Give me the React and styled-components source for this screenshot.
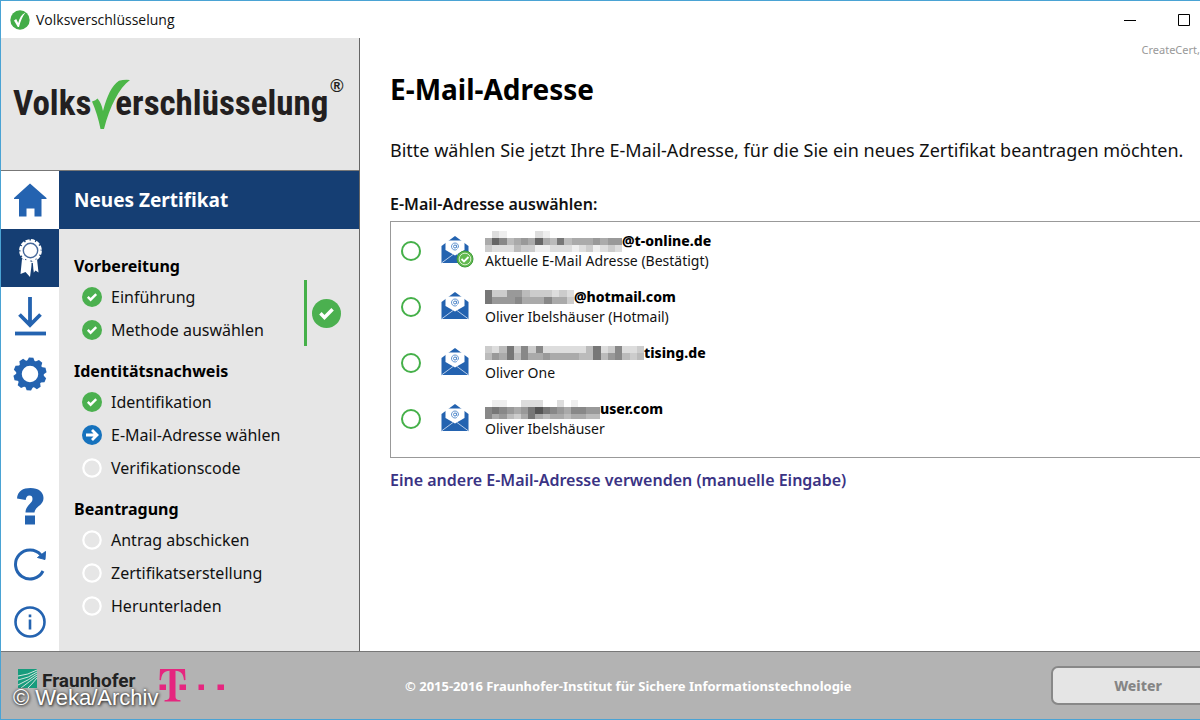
import React from "react";
import styled, { createGlobalStyle } from "styled-components";

const GlobalStyle = createGlobalStyle`
  *, *::before, *::after { box-sizing: border-box; }
  html, body, #root { height: 100%; }
  body { margin: 0; overflow: hidden; font-family: "Noto Sans", "Open Sans", sans-serif; color: #111; background: #fff; }
  h1, h2, h3, p, ol, ul { margin: 0; padding: 0; font-weight: inherit; }
  button { font-family: inherit; }
`;

const Window = styled.div`
  min-height: 100%;
  display: flex;
  flex-direction: column;
  border: 1px solid #4aa3d4;
  border-right: 0;
  overflow: hidden;
`;

const TitleBar = styled.header`
  display: flex;
  align-items: center;
  gap: 6px;
  height: 37px;
  padding-left: 9px;
  font-size: 14px;
  font-family: "Open Sans", sans-serif;
`;

const Controls = styled.div`
  display: flex;
  gap: 30px;
  margin-left: auto;
  padding-right: 4px;
`;

const WindowButton = styled.button`
  display: grid;
  place-items: center;
  width: 24px;
  height: 24px;
  padding: 0;
  border: 0;
  background: none;
`;

const Body = styled.div`
  flex: 1;
  display: flex;
`;

const Sidebar = styled.aside`
  flex: none;
  width: 359px;
  display: flex;
  flex-direction: column;
  background: #e6e6e6;
  border-right: 1px solid #666;
`;

const Brand = styled.div`
  display: flex;
  align-items: center;
  height: 133px;
  padding-left: 12px;
  border-bottom: 1px solid #777;
  font: bold 35px/40px "Roboto Condensed", "Liberation Sans Narrow", sans-serif;
  color: #231f20;
`;

const Registered = styled.span`
  align-self: flex-start;
  margin: 38px 0 0 2px;
  font: bold 18px/20px "Liberation Sans", sans-serif;
`;

const SideBody = styled.div`
  flex: 1;
  display: flex;
`;

const Rail = styled.nav`
  width: 58px;
  display: flex;
  flex-direction: column;
  background: #fff;
`;

const RailButton = styled.button`
  display: grid;
  place-items: center;
  height: 58px;
  padding: 0;
  border: 0;
  background: ${(p) => (p.$active ? "#153e73" : "transparent")};
`;

const Spacer = styled.div`
  flex: 1;
`;

const Steps = styled.div`
  flex: 1;
`;

const StepsTitle = styled.h2`
  height: 58px;
  padding-left: 15px;
  background: #153e73;
  color: #fff;
  font-size: 19px;
  line-height: 58px;
  font-weight: bold;
`;

const Groups = styled.div`
  padding: 23px 16px 0 15px;
`;

const Group = styled.section`
  display: flex;
  justify-content: space-between;
  align-items: flex-end;
  margin-bottom: 11px;
`;

const GroupTitle = styled.h3`
  font-size: 16px;
  line-height: 28px;
  font-weight: bold;
  color: #000;
`;

const StepList = styled.ol`
  list-style: none;
`;

const Step = styled.li`
  display: flex;
  align-items: center;
  gap: 9px;
  height: 33px;
  padding-left: 8px;
  font-size: 16px;
`;

const GroupDone = styled.div`
  display: flex;
  align-items: center;
  height: 66px;
  padding: 0 2px 0 5px;
  border-left: 3px solid #45b049;
`;

const Main = styled.main`
  flex: 1;
  min-width: 0;
  padding-left: 30px;
  overflow: hidden;
`;

const Trace = styled.p`
  text-align: right;
  font-size: 11px;
  line-height: 24px;
  color: #999;
`;

const Heading = styled.h1`
  margin-top: 8px;
  font-size: 28px;
  line-height: 38px;
  font-weight: bold;
  color: #000;
`;

const Lead = styled.p`
  margin-top: 28px;
  font-size: 18px;
  line-height: 28px;
`;

const Choices = styled.fieldset`
  margin: 28px 0 0;
  padding: 0;
  border: 0;
  min-width: 0;
`;

const ChoicesTitle = styled.legend`
  padding: 0;
  font-size: 16px;
  line-height: 24px;
  font-weight: 600;
`;

const ChoiceBox = styled.div`
  margin-top: 5px;
  padding: 1px 0 10px;
  border: 1px solid #999;
  border-right: 0;
`;

const Choice = styled.label`
  display: flex;
  align-items: center;
  height: 56px;
  padding-left: 10px;
`;

const Radio = styled.input`
  appearance: none;
  width: 20px;
  height: 20px;
  margin: 0 20px 0 0;
  border: 2px solid #45b049;
  border-radius: 50%;
  &:checked { background: radial-gradient(#45b049 45%, #fff 50%); }
`;

const Address = styled.span`
  display: flex;
  flex-direction: column;
  margin-left: 11px;
  font-size: 14px;
  line-height: 20px;
`;

const Mail = styled.span`
  display: flex;
  align-items: center;
  height: 20px;
  font-weight: 800;
  color: #000;
`;

const OtherLink = styled.a`
  display: inline-block;
  margin-top: 10px;
  font-size: 16px;
  line-height: 24px;
  font-weight: 600;
  color: #3a3384;
  text-decoration: none;
`;

const Footer = styled.footer`
  display: flex;
  align-items: center;
  justify-content: space-between;
  height: 68px;
  border-top: 1px solid #777;
  background: #b3b3b3;
`;

const Logos = styled.div`
  display: flex;
  position: relative;
  width: 390px;
  height: 67px;
  padding: 17px 0 0 17px;
`;

const Fraunhofer = styled.span`
  margin-left: 5px;
  width: 117px;
  font: bold 19px/24px "Roboto", sans-serif;
  color: #222;
`;

const Credit = styled.span`
  position: absolute;
  left: 12px;
  top: 32px;
  font: 22px/28px "Liberation Sans", sans-serif;
  color: #fff;
  text-shadow: 0 0 3px #333, 1px 1px 3px #333;
`;

const Copyright = styled.p`
  flex: 1;
  padding-left: 14px;
  color: #fff;
  font-size: 13px;
  line-height: 20px;
  font-weight: bold;
`;

const NextButton = styled.button`
  width: 174px;
  height: 39px;
  margin-right: -25px;
  border: 2px solid #888;
  border-radius: 7px;
  background: #e5e5e5;
  color: #858585;
  font-size: 14px;
  font-weight: 800;
`;

const BLUE = "#2463b0";

const Check = ({ size }) => (
  <svg width={size} height={size} viewBox="0 0 20 20">
    <circle cx="10" cy="10" r="10" fill="#4bb04f" />
    <path d="M5.8 9.9l2.8 2.8 5.6-5.6" fill="none" stroke="#fff" strokeWidth="2.4" />
  </svg>
);
const Current = () => (
  <svg width="20" height="20" viewBox="0 0 20 20">
    <circle cx="10" cy="10" r="10" fill="#1672bd" />
    <path d="M4 10h10M10 5l5 5-5 5" fill="none" stroke="#fff" strokeWidth="2.8" />
  </svg>
);
const Open = () => (
  <svg width="20" height="20" viewBox="0 0 20 20">
    <circle cx="10" cy="10" r="8.7" fill="none" stroke="#fff" strokeWidth="2.2" />
  </svg>
);
const icons = { done: <Check size={20} />, current: <Current />, open: <Open /> };

const AppLogo = () => (
  <svg width="20" height="20" viewBox="0 0 20 20">
    <circle cx="10" cy="10" r="9.7" fill="#43ad48" />
    <path d="M4 10.500l2.200-1.500 2 3.900C9.500 8 11.500 4.500 15.500 2.500 12.500 6.500 10.500 11 9 17H7.800z" fill="#fff" />
  </svg>
);

const BrandMark = styled.svg`
  flex: none;
  margin: 0 -15px 0 1px;
`;
const BrandCheck = () => (
  <BrandMark width="38" height="50" viewBox="0 0 38 50">
    <path d="M0 22.500Q4 21.500 5.500 19.500Q9.500 24 11 32C15 17 20 6 27 1.800Q32 .500 38 1C27 9 18 27 12 50H8.500Q5.500 35 0 22.500z" fill="#4cb648" />
  </BrandMark>
);

const Home = () => (
  <svg width="34" height="34" viewBox="0 0 34 34">
    <path d="M17 .500L33.500 15v1H28.500v17.500H21.500v-8h-8v8H6V16H1v-1z" fill={BLUE} />
  </svg>
);
const Badge = () => (
  <svg width="26" height="40" viewBox="0 0 26 40">
    <path d="M5 21L3.500 36l5-2 4.500 5L15 24zM15 24l1.500 11 2-2.500 3 2L20 21z" fill="#fff" />
    <circle cx="13.500" cy="12.500" r="10" fill="#fff" />
    <circle cx="13.500" cy="12.500" r="10" fill="none" stroke="#fff" strokeWidth="2.800" strokeDasharray="4 1.240" />
    <circle cx="13.500" cy="12.500" r="7.200" fill="none" stroke="#47699b" strokeWidth="1.400" />
    <path d="M15.200 25l1 11" stroke="#153e73" strokeWidth="1.200" />
  </svg>
);
const Download = () => (
  <svg width="32" height="40" viewBox="0 0 32 40">
    <path d="M16 1v28M5.500 18.500L16 29l10.500-10.500" fill="none" stroke={BLUE} strokeWidth="3.800" />
    <path d="M1 37.500h31" stroke={BLUE} strokeWidth="3.800" />
  </svg>
);
const Gear = () => (
  <svg width="34" height="34" viewBox="0 0 34 34">
    <circle cx="17" cy="17" r="11" fill="none" stroke={BLUE} strokeWidth="5.500" />
    {[0, 1, 2, 3, 4, 5, 6, 7, 8, 9].map((i) => (
      <path key={i} d="M13 4.500L14.800.500h4.400L21 4.500z" fill={BLUE} transform={`rotate(${i * 36 + 4} 17 17)`} />
    ))}
  </svg>
);
const Help = () => (
  <svg width="28" height="38" viewBox="0 0 28 38">
    <path d="M1 11.500C1.500 4 7 1 14.500 1 22.500 1 27.500 5 27.500 11c0 7.500-8.500 8.500-9 14.500H9.500C9.500 18.500 16.500 16.500 16.500 12 16.500 9.500 15.500 8.500 13.500 8.500c-2.500 0-3.300 1.500-3.800 4.500z" fill={BLUE} />
    <path d="M9 28.500h10V37.500H9z" fill={BLUE} />
  </svg>
);
const Refresh = () => (
  <svg width="34" height="34" viewBox="0 0 34 34">
    <path d="M30 24A14.500 14.500 0 1 1 28 8" fill="none" stroke={BLUE} strokeWidth="3" />
    <path d="M24.500 10.500l8-6-.500 8z" fill={BLUE} stroke={BLUE} />
  </svg>
);
const Info = () => (
  <svg width="34" height="34" viewBox="0 0 34 34">
    <circle cx="17" cy="17" r="14.500" fill="none" stroke={BLUE} strokeWidth="2.600" />
    <path d="M15.700 9.500h2.600v2.800h-2.600zM15.700 14.500h2.600v10h-2.600z" fill={BLUE} />
  </svg>
);

const Envelope = ({ verified }) => (
  <svg width="33" height="34" viewBox="0 0 33 34">
    <path d="M.500 12L14 2l13.500 10v17H.500z" fill="#2463b0" />
    <path d="M4.500 6.500h19V16L14 21.500 4.500 16z" fill="#fff" />
    <path d="M.500 29L12 20.500M27.500 29L16 20.500" fill="none" stroke="#b8cde8" strokeWidth="1" />
    <circle cx="14" cy="12.500" r="1.500" fill="none" stroke="#4d86c9" strokeWidth="1" />
    <path d="M15.600 10.800v2.600q1 1.300 1.800 0c.600-2.600-1.200-4.400-3.400-4.400a3.500 3.500 0 1 0 1.800 6.500" fill="none" stroke="#4d86c9" strokeWidth=".9" />
    {verified && (
      <g>
        <circle cx="24" cy="25" r="8" fill="#62b94f" stroke="#3f9b3b" strokeWidth="1" />
        <circle cx="24" cy="25" r="5.800" fill="none" stroke="#d6efcf" strokeWidth="1" />
        <path d="M20.500 25l2.500 2.500 4.500-4.500" fill="none" stroke="#fff" strokeWidth="1.800" />
      </g>
    )}
  </svg>
);

const Mosaic = ({ rows, width, heights }) => {
  const cell = width / rows[0].length;
  const total = heights.reduce((sum, h) => sum + h, 0);
  return (
    <svg width={width} height={total} viewBox={`0 0 ${width} ${total}`} shapeRendering="crispEdges" aria-hidden="true">
      {rows.map((row, r) => {
        const top = heights.slice(0, r).reduce((sum, h) => sum + h, 0);
        return [...row].map((c, i) => {
          const v = parseInt(c, 16) * 17;
          return <rect key={r + "-" + i} x={i * cell} y={top} width={cell} height={heights[r]} fill={`rgb(${v},${v},${v})`} />;
        });
      })}
    </svg>
  );
};

const groups = [
  { title: "Vorbereitung", done: true, steps: [["done", "Einführung"], ["done", "Methode auswählen"]] },
  { title: "Identitätsnachweis", steps: [["done", "Identifikation"], ["current", "E-Mail-Adresse wählen"], ["open", "Verifikationscode"]] },
  { title: "Beantragung", steps: [["open", "Antrag abschicken"], ["open", "Zertifikatserstellung"], ["open", "Herunterladen"]] },
];

const mails = [
  {
    mosaic: { width: 137, heights: [7, 7, 7], rows: ["fdeffffdeffffffffff", "a68ba9a6ab7baaa9a99", "cdddbcceedddedcedcd"] },
    domain: "@t-online.de", name: "Aktuelle E-Mail Adresse (Bestätigt)", verified: true,
  },
  {
    mosaic: { width: 89, heights: [7, 7], rows: ["7cc99bcccdcd", "79998aaa8aac"] },
    domain: "@hotmail.com", name: "Oliver Ibelshäuser (Hotmail)",
  },
  {
    mosaic: { width: 159, heights: [7, 7], rows: ["cdb7c8c8ddddddb7dc8ddc", "b9a7b8aa9aaaabb7b98bcb"] },
    domain: "tising.de", name: "Oliver One",
  },
  {
    mosaic: { width: 115, heights: [7, 7, 5], rows: ["feeffdddffdfeffff", "8789a975789a8899a", "8a9bca7abaabaabbc"].map((r) => r.slice(0, 16)) },
    domain: "user.com", name: "Oliver Ibelshäuser",
  },
];

export default function App() {
  return (
    <Window>
      <GlobalStyle />
      <TitleBar>
        <AppLogo />
        <span>Volksverschlüsselung</span>
        <Controls>
          <WindowButton aria-label="Minimieren">
            <svg width="12" height="12"><path d="M0 6.500h12" stroke="#000" /></svg>
          </WindowButton>
          <WindowButton aria-label="Maximieren">
            <svg width="12" height="12"><path d="M.500.500h11v11H.500z" fill="none" stroke="#000" /></svg>
          </WindowButton>
        </Controls>
      </TitleBar>
      <Body>
        <Sidebar>
          <Brand>
            <span>Volks</span>
            <BrandCheck />
            <span>erschlüsselung</span>
            <Registered>®</Registered>
          </Brand>
          <SideBody>
            <Rail>
              <RailButton aria-label="Start"><Home /></RailButton>
              <RailButton $active aria-label="Zertifikat"><Badge /></RailButton>
              <RailButton aria-label="Herunterladen"><Download /></RailButton>
              <RailButton aria-label="Einstellungen"><Gear /></RailButton>
              <Spacer />
              <RailButton aria-label="Hilfe"><Help /></RailButton>
              <RailButton aria-label="Aktualisieren"><Refresh /></RailButton>
              <RailButton aria-label="Info"><Info /></RailButton>
            </Rail>
            <Steps>
              <StepsTitle>Neues Zertifikat</StepsTitle>
              <Groups>
                {groups.map((g) => (
                  <Group key={g.title}>
                    <div>
                      <GroupTitle>{g.title}</GroupTitle>
                      <StepList>
                        {g.steps.map(([state, label]) => (
                          <Step key={label}>{icons[state]}{label}</Step>
                        ))}
                      </StepList>
                    </div>
                    {g.done && <GroupDone><Check size={29} /></GroupDone>}
                  </Group>
                ))}
              </Groups>
            </Steps>
          </SideBody>
        </Sidebar>
        <Main>
          <Trace>CreateCert,</Trace>
          <Heading>E-Mail-Adresse</Heading>
          <Lead>Bitte wählen Sie jetzt Ihre E-Mail-Adresse, für die Sie ein neues Zertifikat beantragen möchten.</Lead>
          <Choices>
            <ChoicesTitle>E-Mail-Adresse auswählen:</ChoicesTitle>
            <ChoiceBox>
              {mails.map((m) => (
                <Choice key={m.domain}>
                  <Radio type="radio" name="mail" />
                  <Envelope verified={m.verified} />
                  <Address>
                    <Mail><Mosaic {...m.mosaic} />{m.domain}</Mail>
                    <span>{m.name}</span>
                  </Address>
                </Choice>
              ))}
            </ChoiceBox>
          </Choices>
          <OtherLink href="#manuell">Eine andere E-Mail-Adresse verwenden (manuelle Eingabe)</OtherLink>
        </Main>
      </Body>
      <Footer>
        <Logos>
          <svg width="19" height="19" viewBox="0 0 19 19">
            <path d="M0 0h19v19H0z" fill="#179c7d" />
            <path d="M0 7Q10 6 19 1M0 11Q11 9 19 3M0 16Q11 11 19 5M3 19Q12 12 19 7M10 19Q15 14 19 9" fill="none" stroke="#d3e6de" strokeWidth="1" />
          </svg>
          <Fraunhofer>Fraunhofer</Fraunhofer>
          <svg width="68" height="34" viewBox="0 0 68 34">
            <path d="M1 0h25l.500 11-1.500.200C24.500 5 22 2 16.500 1.700V27c0 3 1 4 5 4.200V32.500H5.500v-1.300c4-.200 5-1.200 5-4.200V1.700C5 2 2.500 5 2 11.200L.500 11zM.500 15.500H7V21H.500zM20.500 15.500H27V21h-6.500zM39.500 15.500H45V21h-5.500zM58.500 15.500H65V21h-6.500z" fill="#e5267f" />
          </svg>
          <Credit>© Weka/Archiv</Credit>
        </Logos>
        <Copyright>© 2015-2016 Fraunhofer-Institut für Sichere Informationstechnologie</Copyright>
        <NextButton>Weiter</NextButton>
      </Footer>
    </Window>
  );
}
